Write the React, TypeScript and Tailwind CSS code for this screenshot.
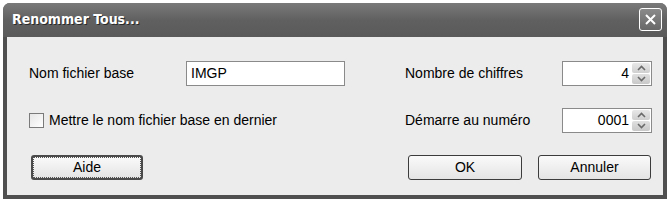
export default function App() {
  const font = { fontFamily: '"Liberation Sans", Arial, sans-serif' };

  const SpinBox = ({ value }: { value: string }) => (
    <div className="flex h-[25px] w-[90px] border border-[#8a8a8a] bg-white p-[1px]">
      <div className="flex flex-1 items-center justify-end pr-[3px] text-[14px] text-black">
        {value}
      </div>
      <div className="flex w-[18px] flex-col gap-[1px]">
        <div className="flex flex-1 items-center justify-center rounded-[2px] bg-gradient-to-b from-[#e8e8e8] to-[#cfcfcf]">
          <svg width="9" height="6" viewBox="0 0 9 6">
            <path d="M1 5 L4.5 1.5 L8 5" stroke="#6a6a6a" strokeWidth="1.6" fill="none" />
          </svg>
        </div>
        <div className="flex flex-1 items-center justify-center rounded-[2px] bg-gradient-to-b from-[#e0e0e0] to-[#c8c8c8]">
          <svg width="9" height="6" viewBox="0 0 9 6">
            <path d="M1 1 L4.5 4.5 L8 1" stroke="#6a6a6a" strokeWidth="1.6" fill="none" />
          </svg>
        </div>
      </div>
    </div>
  );

  const Button = ({ label, width, focused }: { label: string; width: string; focused?: boolean }) => (
    <div
      className={`flex h-[25px] ${width} items-center justify-center rounded-[3px] bg-gradient-to-b from-[#fafafa] to-[#e4e4e4] text-[14px] text-black ${
        focused ? "border-2 border-[#4a4a4a]" : "border border-[#3c3c3c]"
      }`}
    >
      {focused ? (
        <div className="flex h-full w-full items-center justify-center border border-dotted border-[#555]">
          {label}
        </div>
      ) : (
        label
      )}
    </div>
  );

  return (
    <div className="h-[201px] w-[671px] bg-white p-[3px]" style={font}>
      <div className="flex h-[196px] w-[664px] flex-col rounded-t-[7px] bg-[#4f4f4f]">
        <div className="flex h-[34px] items-center justify-between rounded-t-[7px] bg-gradient-to-b from-[#7a7a7a] via-[#606060] to-[#5a5a5a] pb-[2px] pl-[9px] pr-[5px]">
          <span
            className="text-[14px] font-bold text-white [text-shadow:1px_1px_0_#2a2a2a]"
            style={{ fontFamily: '"DejaVu Sans Condensed", "DejaVu Sans", sans-serif', fontStretch: "condensed" }}
          >
            Renommer Tous...
          </span>
          <div className="flex h-[23px] w-[23px] items-center justify-center rounded-[3px] border border-white bg-gradient-to-b from-[#8a8a8a] to-[#686868]">
            <svg width="13" height="13" viewBox="0 0 13 13">
              <path d="M2 2 L11 11 M11 2 L2 11" stroke="white" strokeWidth="2" />
            </svg>
          </div>
        </div>
        <div className="mx-[4px] mb-[4px] flex flex-1 flex-col bg-[#ececec] pl-[22px] text-[14px] text-black">
          <div className="mt-[24px] flex h-[25px] items-center">
            <span className="w-[157px]">Nom fichier base</span>
            <div className="flex h-[25px] w-[159px] items-center border border-[#8a8a8a] bg-white pl-[4px]">
              IMGP
            </div>
            <span className="ml-[60px] w-[157px]">Nombre de chiffres</span>
            <SpinBox value="4" />
          </div>
          <div className="mt-[22px] flex h-[25px] items-center">
            <div className="flex w-[376px] items-center">
              <div className="h-[15px] w-[15px] border border-[#7a7a7a] bg-gradient-to-br from-[#e6e6e6] to-white" />
              <span className="ml-[5px]">Mettre le nom fichier base en dernier</span>
            </div>
            <span className="w-[157px]">Démarre au numéro</span>
            <SpinBox value="0001" />
          </div>
          <div className="mt-[22px] flex items-center">
            <div className="ml-[2px]">
              <Button label="Aide" width="w-[112px]" focused />
            </div>
            <div className="ml-[265px]">
              <Button label="OK" width="w-[114px]" />
            </div>
            <div className="ml-[16px]">
              <Button label="Annuler" width="w-[113px]" />
            </div>
          </div>
        </div>
      </div>
    </div>
  );
}
